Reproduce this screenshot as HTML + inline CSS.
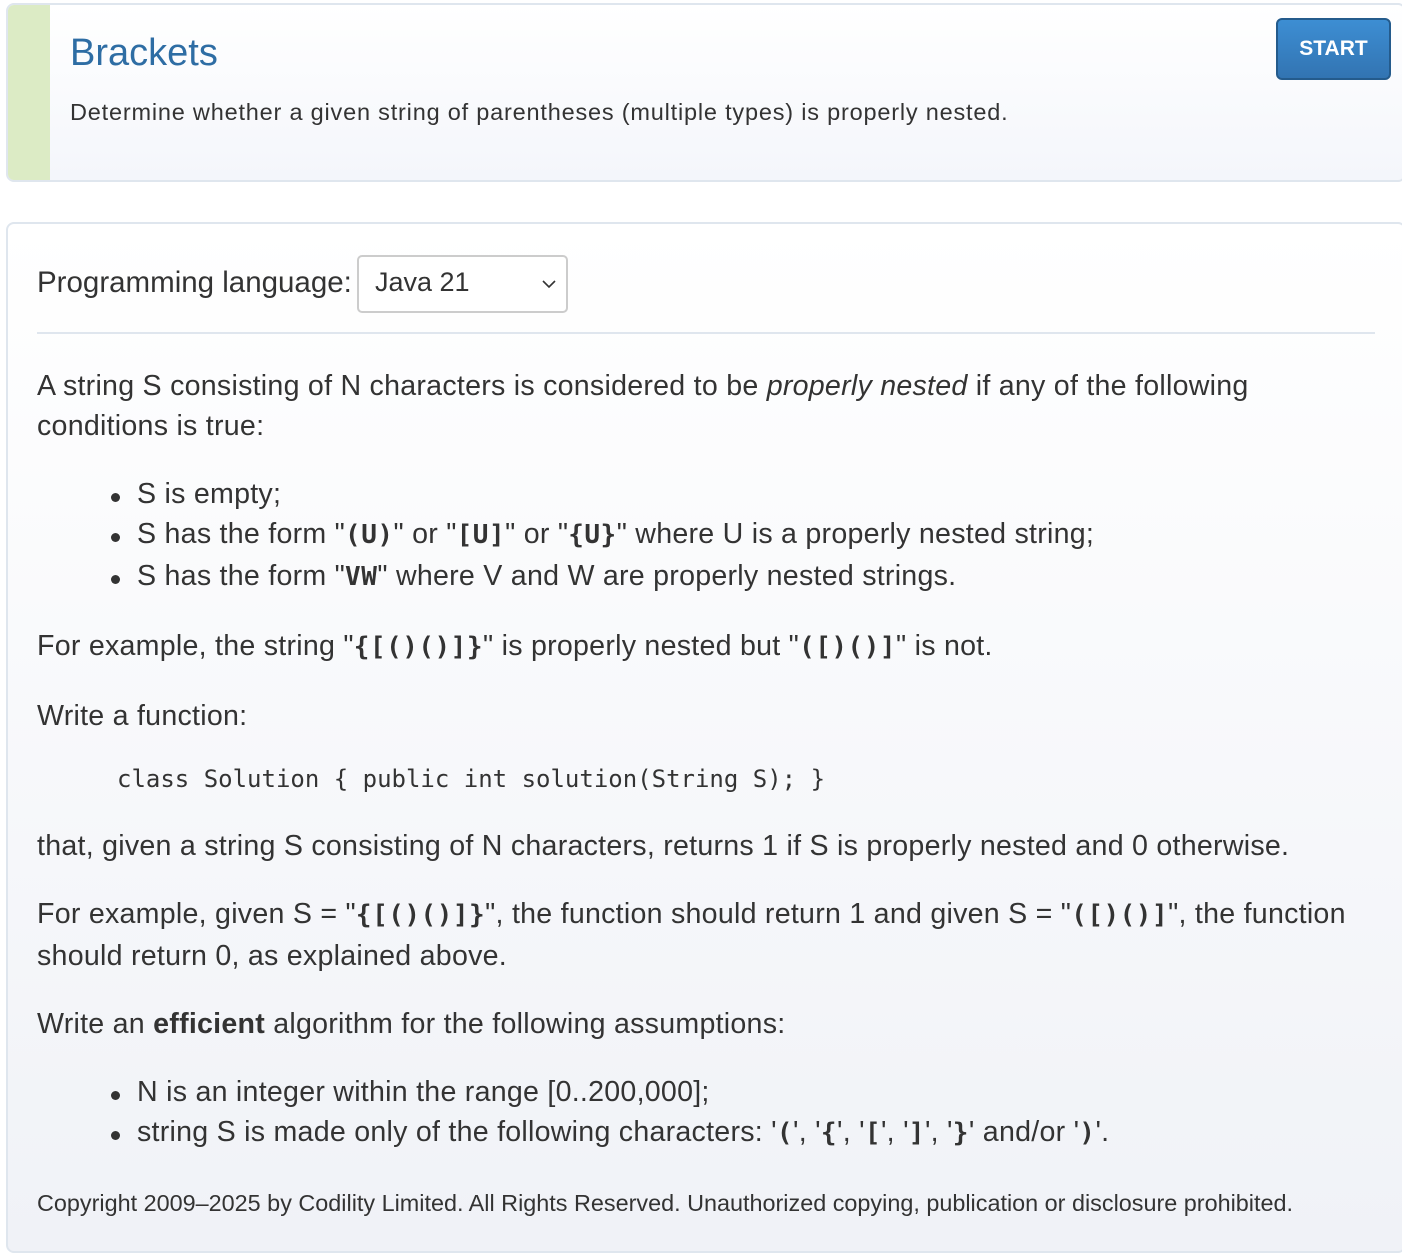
<!DOCTYPE html>
<html><head><meta charset="utf-8"><style>
*{margin:0;padding:0;box-sizing:border-box}
body{width:1402px;height:1254px;background:#fff;font-family:"Liberation Sans",sans-serif;color:#333;position:relative;overflow:hidden}
.c1{position:absolute;left:6px;top:3px;width:1400px;height:179px;border:2px solid #dfe6ee;border-radius:8px;background:linear-gradient(#fff,#f4f6fb);overflow:hidden}
.strip{position:absolute;left:0;top:0;bottom:0;width:42px;background:#dcebc5}
h1{position:absolute;left:62px;top:27px;font-size:38px;font-weight:normal;color:#2e6da4}
.desc{position:absolute;left:62px;top:94px;font-size:23.5px;letter-spacing:0.8px;color:#333;white-space:nowrap}
.btn{position:absolute;left:1276px;top:18px;width:115px;height:62px;border:2px solid #245b8c;border-radius:6px;background:linear-gradient(#3d8ed3,#3274b2);color:#fff;font-weight:bold;font-size:21px;text-align:center;line-height:58px}
.c2{position:absolute;left:6px;top:222px;width:1400px;height:1031px;border:2px solid #dfe6ee;border-radius:8px;background:linear-gradient(#fff,#f0f2f7)}
.t{position:absolute;left:37px;font-size:28.6px;letter-spacing:0.25px;white-space:nowrap;color:#333}
.b{position:absolute;left:137px;font-size:28.6px;letter-spacing:0.25px;white-space:nowrap}
.b:before{content:"";position:absolute;left:-26px;top:15px;width:9px;height:9px;border-radius:50%;background:#333}
code{font-family:"DejaVu Sans Mono","Liberation Mono",monospace;font-size:26px;font-weight:bold;color:#333;letter-spacing:0.5px}
.m{font-family:"DejaVu Sans Mono","Liberation Mono",monospace;font-size:24px;letter-spacing:0}
.sel{position:absolute;left:357px;top:255px;width:211px;height:58px;border:2px solid #ccc;border-radius:5px;background:#fff;font-size:27px;padding:10px 0 0 16px}
.hr{position:absolute;left:37px;top:332px;width:1338px;height:2px;background:#dfe6ee}
</style></head><body>
<div class="c1"><div class="strip"></div><h1>Brackets</h1><div class="desc">Determine whether a given string of parentheses (multiple types) is properly nested.</div></div>
<div class="btn">START</div>
<div class="c2"></div>
<div class="t" style="top:266px;font-size:29.5px;letter-spacing:0">Programming language:</div>
<div class="sel">Java 21<svg style="position:absolute;right:10px;top:22px" width="14" height="10" viewBox="0 0 14 10"><path d="M1 2l6 6 6-6" stroke="#333" stroke-width="1.6" fill="none"/></svg></div>
<div class="hr"></div>
<div class="t" style="top:370px">A string S consisting of N characters is considered to be <i>properly nested</i> if any of the following</div>
<div class="t" style="top:410px">conditions is true:</div>
<div class="b" style="top:478px">S is empty;</div>
<div class="b" style="top:518px">S has the form "<code>(U)</code>" or "<code>[U]</code>" or "<code>{U}</code>" where U is a properly nested string;</div>
<div class="b" style="top:560px">S has the form "<code>VW</code>" where V and W are properly nested strings.</div>
<div class="t" style="top:630px">For example, the string "<code>{[()()]}</code>" is properly nested but "<code>([)()]</code>" is not.</div>
<div class="t" style="top:700px">Write a function:</div>
<div class="t m" style="top:765px;left:117px">class Solution { public int solution(String S); }</div>
<div class="t" style="top:830px">that, given a string S consisting of N characters, returns 1 if S is properly nested and 0 otherwise.</div>
<div class="t" style="top:898px">For example, given S = "<code>{[()()]}</code>", the function should return 1 and given S = "<code>([)()]</code>", the function</div>
<div class="t" style="top:940px">should return 0, as explained above.</div>
<div class="t" style="top:1008px">Write an <b>efficient</b> algorithm for the following assumptions:</div>
<div class="b" style="top:1076px">N is an integer within the range [0..200,000];</div>
<div class="b" style="top:1116px">string S is made only of the following characters: '<code>(</code>', '<code>{</code>', '<code>[</code>', '<code>]</code>', '<code>}</code>' and/or '<code>)</code>'.</div>
<div class="t" style="top:1190px;font-size:23.4px;letter-spacing:0">Copyright 2009–2025 by Codility Limited. All Rights Reserved. Unauthorized copying, publication or disclosure prohibited.</div>
</body></html>
